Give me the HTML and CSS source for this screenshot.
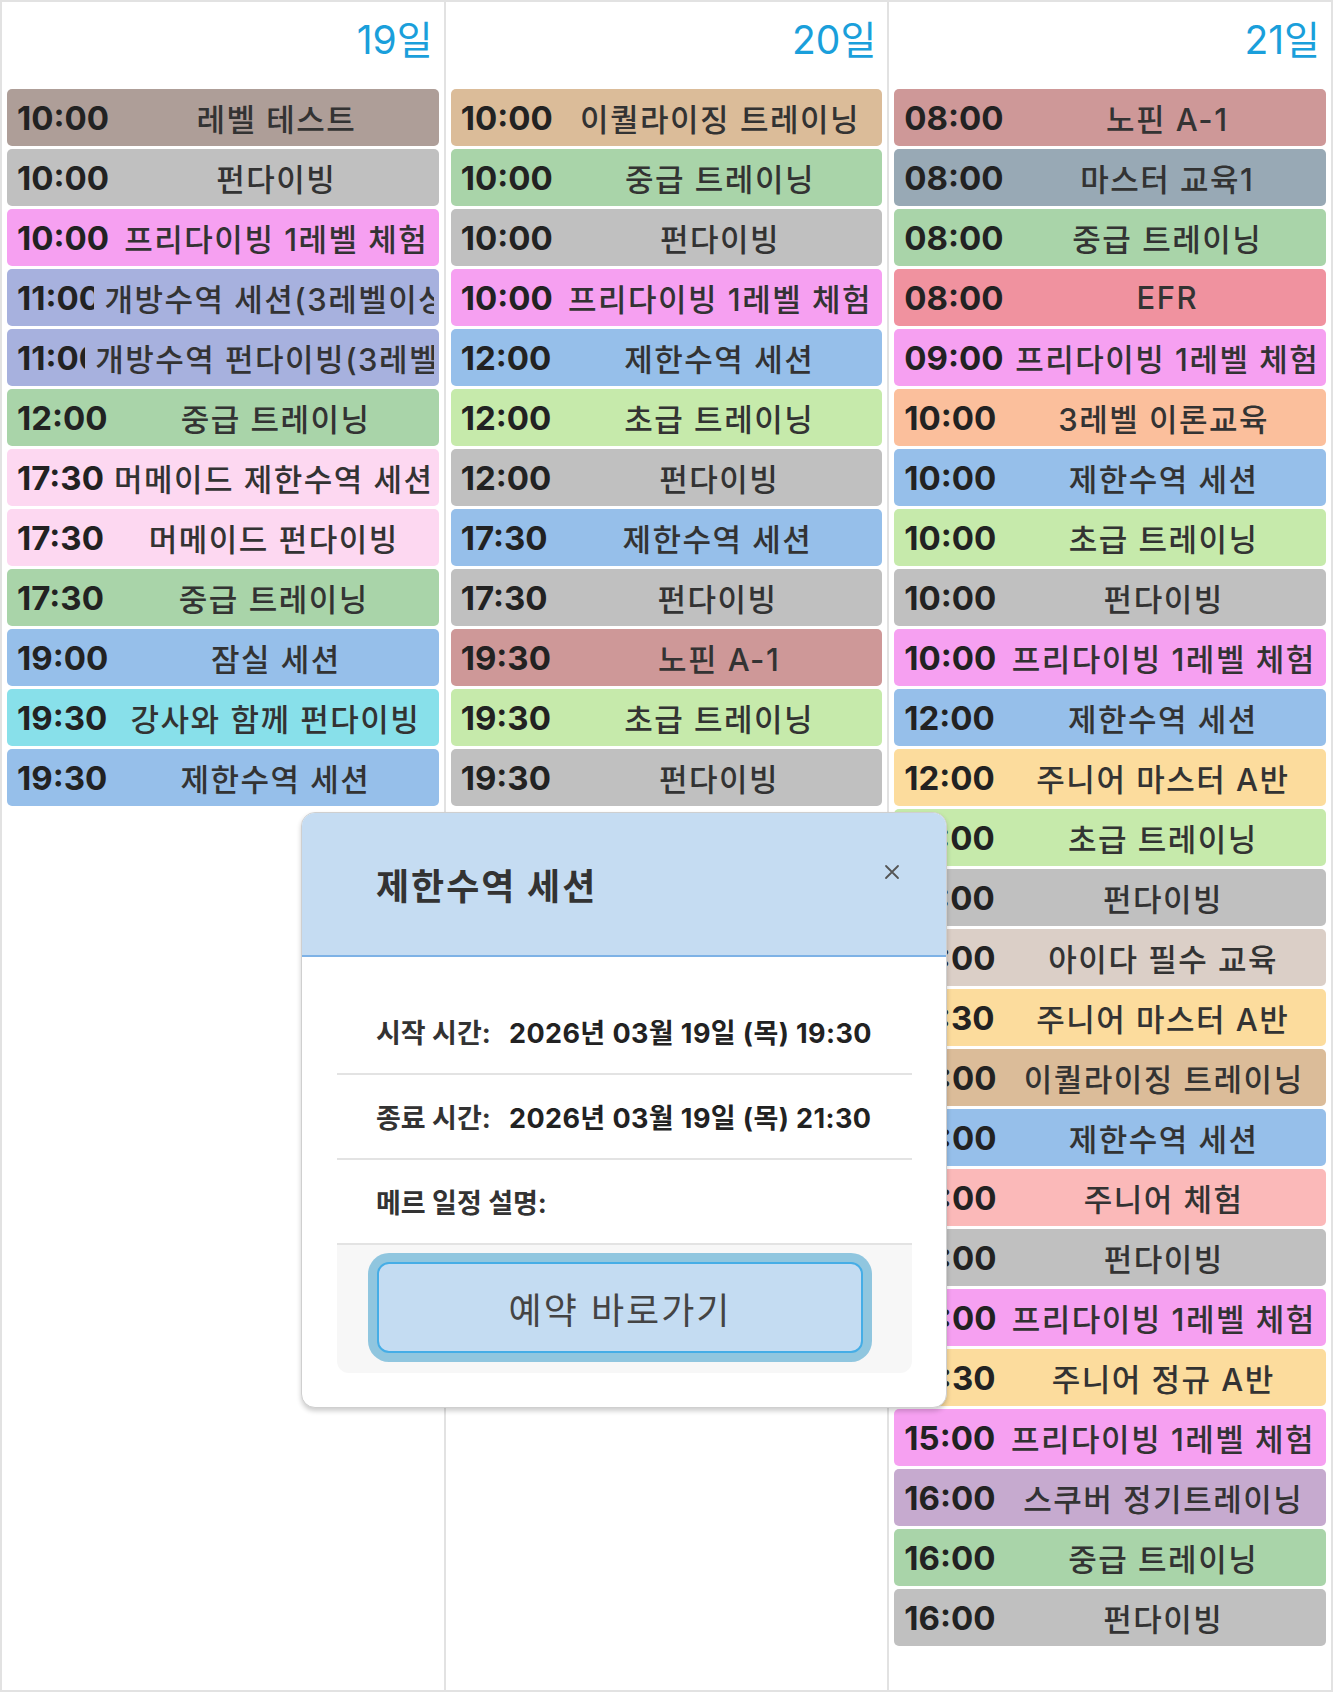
FILE: index.html
```html
<!DOCTYPE html>
<html lang="ko">
<head>
<meta charset="utf-8">
<title>일정</title>
<link rel="stylesheet" href="styles.css">
</head>
<body>
<div class="calendar">
  <div class="day">
    <div class="day-head"><span class="day-num">19일</span></div>
    <div class="events">
      <div class="ev c-level"><span class="ev-time">10:00</span><span class="ev-title">레벨 테스트</span></div>
      <div class="ev c-fun"><span class="ev-time">10:00</span><span class="ev-title">펀다이빙</span></div>
      <div class="ev c-free"><span class="ev-time">10:00</span><span class="ev-title">프리다이빙 1레벨 체험</span></div>
      <div class="ev c-open"><span class="ev-time">11:00</span><span class="ev-title">개방수역 세션(3레벨이상)</span></div>
      <div class="ev c-open"><span class="ev-time">11:00</span><span class="ev-title">개방수역 펀다이빙(3레벨이상)</span></div>
      <div class="ev c-mid"><span class="ev-time">12:00</span><span class="ev-title">중급 트레이닝</span></div>
      <div class="ev c-mermaid"><span class="ev-time">17:30</span><span class="ev-title">머메이드 제한수역 세션</span></div>
      <div class="ev c-mermaid"><span class="ev-time">17:30</span><span class="ev-title">머메이드 펀다이빙</span></div>
      <div class="ev c-mid"><span class="ev-time">17:30</span><span class="ev-title">중급 트레이닝</span></div>
      <div class="ev c-pool"><span class="ev-time">19:00</span><span class="ev-title">잠실 세션</span></div>
      <div class="ev c-cyan"><span class="ev-time">19:30</span><span class="ev-title">강사와 함께 펀다이빙</span></div>
      <div class="ev c-pool"><span class="ev-time">19:30</span><span class="ev-title">제한수역 세션</span></div>
    </div>
  </div>
  <div class="day">
    <div class="day-head"><span class="day-num">20일</span></div>
    <div class="events">
      <div class="ev c-equal"><span class="ev-time">10:00</span><span class="ev-title">이퀄라이징 트레이닝</span></div>
      <div class="ev c-mid"><span class="ev-time">10:00</span><span class="ev-title">중급 트레이닝</span></div>
      <div class="ev c-fun"><span class="ev-time">10:00</span><span class="ev-title">펀다이빙</span></div>
      <div class="ev c-free"><span class="ev-time">10:00</span><span class="ev-title">프리다이빙 1레벨 체험</span></div>
      <div class="ev c-pool"><span class="ev-time">12:00</span><span class="ev-title">제한수역 세션</span></div>
      <div class="ev c-basic"><span class="ev-time">12:00</span><span class="ev-title">초급 트레이닝</span></div>
      <div class="ev c-fun"><span class="ev-time">12:00</span><span class="ev-title">펀다이빙</span></div>
      <div class="ev c-pool"><span class="ev-time">17:30</span><span class="ev-title">제한수역 세션</span></div>
      <div class="ev c-fun"><span class="ev-time">17:30</span><span class="ev-title">펀다이빙</span></div>
      <div class="ev c-nofin"><span class="ev-time">19:30</span><span class="ev-title">노핀 A-1</span></div>
      <div class="ev c-basic"><span class="ev-time">19:30</span><span class="ev-title">초급 트레이닝</span></div>
      <div class="ev c-fun"><span class="ev-time">19:30</span><span class="ev-title">펀다이빙</span></div>
    </div>
  </div>
  <div class="day">
    <div class="day-head"><span class="day-num">21일</span></div>
    <div class="events">
      <div class="ev c-nofin"><span class="ev-time">08:00</span><span class="ev-title">노핀 A-1</span></div>
      <div class="ev c-master"><span class="ev-time">08:00</span><span class="ev-title">마스터 교육1</span></div>
      <div class="ev c-mid"><span class="ev-time">08:00</span><span class="ev-title">중급 트레이닝</span></div>
      <div class="ev c-efr"><span class="ev-time">08:00</span><span class="ev-title">EFR</span></div>
      <div class="ev c-free"><span class="ev-time">09:00</span><span class="ev-title">프리다이빙 1레벨 체험</span></div>
      <div class="ev c-theory"><span class="ev-time">10:00</span><span class="ev-title">3레벨 이론교육</span></div>
      <div class="ev c-pool"><span class="ev-time">10:00</span><span class="ev-title">제한수역 세션</span></div>
      <div class="ev c-basic"><span class="ev-time">10:00</span><span class="ev-title">초급 트레이닝</span></div>
      <div class="ev c-fun"><span class="ev-time">10:00</span><span class="ev-title">펀다이빙</span></div>
      <div class="ev c-free"><span class="ev-time">10:00</span><span class="ev-title">프리다이빙 1레벨 체험</span></div>
      <div class="ev c-pool"><span class="ev-time">12:00</span><span class="ev-title">제한수역 세션</span></div>
      <div class="ev c-junior"><span class="ev-time">12:00</span><span class="ev-title">주니어 마스터 A반</span></div>
      <div class="ev c-basic"><span class="ev-time">12:00</span><span class="ev-title">초급 트레이닝</span></div>
      <div class="ev c-fun"><span class="ev-time">12:00</span><span class="ev-title">펀다이빙</span></div>
      <div class="ev c-aida"><span class="ev-time">13:00</span><span class="ev-title">아이다 필수 교육</span></div>
      <div class="ev c-junior"><span class="ev-time">13:30</span><span class="ev-title">주니어 마스터 A반</span></div>
      <div class="ev c-equal"><span class="ev-time">14:00</span><span class="ev-title">이퀄라이징 트레이닝</span></div>
      <div class="ev c-pool"><span class="ev-time">14:00</span><span class="ev-title">제한수역 세션</span></div>
      <div class="ev c-jexp"><span class="ev-time">14:00</span><span class="ev-title">주니어 체험</span></div>
      <div class="ev c-fun"><span class="ev-time">14:00</span><span class="ev-title">펀다이빙</span></div>
      <div class="ev c-free"><span class="ev-time">14:00</span><span class="ev-title">프리다이빙 1레벨 체험</span></div>
      <div class="ev c-junior"><span class="ev-time">14:30</span><span class="ev-title">주니어 정규 A반</span></div>
      <div class="ev c-free"><span class="ev-time">15:00</span><span class="ev-title">프리다이빙 1레벨 체험</span></div>
      <div class="ev c-scuba"><span class="ev-time">16:00</span><span class="ev-title">스쿠버 정기트레이닝</span></div>
      <div class="ev c-mid"><span class="ev-time">16:00</span><span class="ev-title">중급 트레이닝</span></div>
      <div class="ev c-fun"><span class="ev-time">16:00</span><span class="ev-title">펀다이빙</span></div>
    </div>
  </div>
</div>

<div class="popover">
  <div class="pop-head">
    <span class="pop-title">제한수역 세션</span>
    <span class="pop-close" aria-label="닫기"><svg width="18" height="18" viewBox="0 0 18 18"><path d="M3 3 L15 15 M15 3 L3 15" stroke="#555" stroke-width="1.8" stroke-linecap="round" fill="none"/></svg></span>
  </div>
  <div class="pop-body">
    <div class="info-row"><span class="info-label">시작 시간:</span><span class="info-value">2026년 03월 19일 (목) 19:30</span></div>
    <div class="info-row"><span class="info-label">종료 시간:</span><span class="info-value">2026년 03월 19일 (목) 21:30</span></div>
    <div class="info-row"><span class="info-label">메르 일정 설명:</span></div>
    <div class="pop-foot"><button class="btn-book" type="button">예약 바로가기</button></div>
  </div>
</div>
</body>
</html>
```

FILE: styles.css
```css
html, body {
  margin: 0;
  padding: 0;
  background: #ffffff;
}
body {
  font-family: "Inter", "Noto Sans CJK KR", sans-serif;
  color: #333;
  position: relative;
  width: 1333px;
  height: 1692px;
  overflow: hidden;
}

.calendar {
  display: grid;
  grid-template-columns: repeat(3, 1fr);
  width: 1333px;
  box-sizing: border-box;
  border-top: 2px solid #e2e2e2;
  border-left: 2px solid #e2e2e2;
}
.day {
  border-right: 2px solid #e2e2e2;
  border-bottom: 2px solid #e2e2e2;
  min-width: 0;
}
.day-head {
  height: 82px;
  box-sizing: border-box;
  padding: 15px 11px 0 0;
  text-align: right;
}
.day-num {
  font-size: 39px;
  line-height: 46px;
  color: #1a9fdb;
}
.events {
  padding: 5px 0 41px;
}
.ev {
  display: flex;
  align-items: center;
  height: 57px;
  box-sizing: border-box;
  margin: 0 5px 3px 5px;
  padding: 0 5px 0 10px;
  border-radius: 5px;
  white-space: nowrap;
  overflow: hidden;
}
.ev-time {
  flex: 0 1 auto;
  overflow: hidden;
  font-size: 33px;
  font-weight: 700;
  color: #222;
  margin-right: 10px;
}
.ev-title {
  flex: 1 1 auto;
  overflow: hidden;
  text-align: center;
  font-size: 31px;
  font-weight: 500;
  letter-spacing: 1.5px;
  color: #333;
}

.c-level { background: #ae9e98; }
.c-fun { background: #c0c0c0; }
.c-free { background: #f6a0f1; }
.c-open { background: #a7b1de; }
.c-mid { background: #a9d4a9; }
.c-mermaid { background: #fdd8f1; }
.c-pool { background: #96bfea; }
.c-cyan { background: #88e0ea; }
.c-equal { background: #dbbc99; }
.c-basic { background: #c6eaab; }
.c-nofin { background: #ce9898; }
.c-master { background: #98a9b5; }
.c-efr { background: #f0929f; }
.c-theory { background: #fbbf9c; }
.c-junior { background: #fcdc9d; }
.c-aida { background: #dbcfc7; }
.c-jexp { background: #fbb9b9; }
.c-scuba { background: #c6aacf; }

.popover {
  position: absolute;
  left: 301px;
  top: 812px;
  width: 646px;
  height: 596px;
  box-sizing: border-box;
  background: #fff;
  border: 1px solid #cfcfcf;
  border-radius: 14px;
  box-shadow: 0 3px 5px rgba(0, 0, 0, 0.2);
  overflow: hidden;
}
.pop-head {
  position: relative;
  height: 144px;
  box-sizing: border-box;
  background: #c5dcf2;
  border-bottom: 2px solid #7eb2e6;
  display: flex;
  align-items: center;
  padding-left: 74px;
}
.pop-title {
  font-size: 36px;
  font-weight: 700;
  letter-spacing: 2px;
  color: #333;
}
.pop-close {
  position: absolute;
  right: 45px;
  top: 50px;
  width: 18px;
  height: 18px;
  display: block;
}
.pop-close svg {
  display: block;
}
.pop-body {
  padding: 33px 34px 0 35px;
}
.info-row {
  display: flex;
  align-items: center;
  height: 85px;
  box-sizing: border-box;
  border-bottom: 2px solid #e3e3e3;
  padding-left: 39px;
  font-size: 27px;
  font-weight: 700;
}
.info-label {
  flex: 0 0 auto;
  min-width: 133px;
  color: #333;
}
.info-value {
  color: #222;
  letter-spacing: 0.4px;
}
.pop-foot {
  background: #f7f7f7;
  border-radius: 0 0 12px 12px;
  padding: 17px 0 20px 40px;
}
.btn-book {
  display: block;
  width: 486px;
  height: 91px;
  box-sizing: border-box;
  margin: 0;
  background: #c4dcf2;
  border: 2px solid #45ade6;
  border-radius: 12px;
  box-shadow: 0 0 0 9px #90c6df;
  font-family: "Inter", "Noto Sans CJK KR", sans-serif;
  font-size: 36px;
  font-weight: 400;
  letter-spacing: 2px;
  color: #444;
  padding: 0;
}
```
